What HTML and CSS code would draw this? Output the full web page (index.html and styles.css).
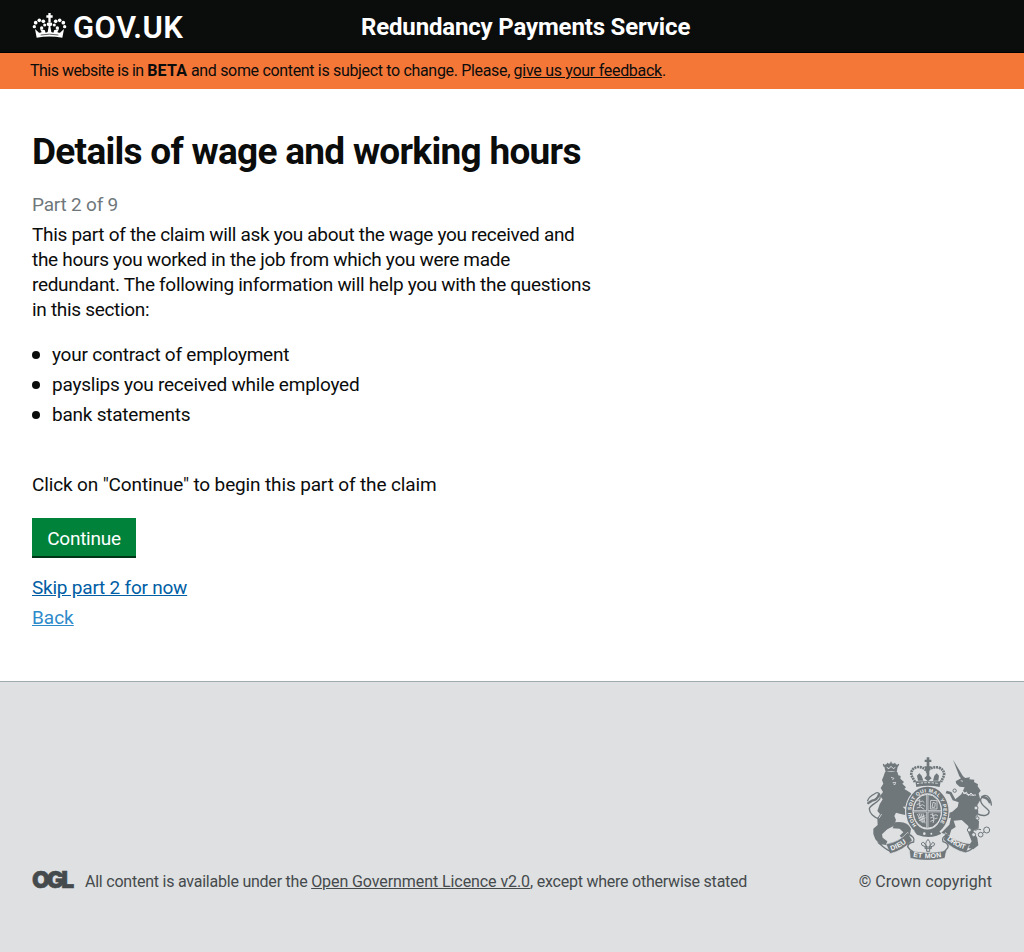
FILE: index.html
```html
<!DOCTYPE html>
<html lang="en">
<head>
<meta charset="utf-8">
<title>Details of wage and working hours</title>
<link rel="stylesheet" href="styles.css">
</head>
<body>
<header class="header">
  <a class="logo" href="#">
    <svg class="crown" viewBox="36 36 105 84" aria-hidden="true">
      <g fill="#fff">
        <path d="M50 113L45 87L57 98Q63 99 65 96L60 88L74 90L77 98L83 96L86 79L80 76L81 68L96 68L97 76L91 79L94 96L100 98L103 90L117 88L112 96Q114 99 120 98L132 87L127 113Q88 106 50 113Z"/>
        <path d="M85 39h7v7h6v7h-6v15h-7V53h-6v-7h6z"/>
        <circle cx="43" cy="80" r="5"/><circle cx="47" cy="68" r="5.5"/><circle cx="58" cy="61" r="5.5"/><circle cx="70" cy="64" r="5.5"/><circle cx="74" cy="75" r="4.5"/><circle cx="65" cy="84" r="5"/>
        <circle cx="134" cy="80" r="5"/><circle cx="130" cy="68" r="5.5"/><circle cx="119" cy="61" r="5.5"/><circle cx="107" cy="64" r="5.5"/><circle cx="103" cy="75" r="4.5"/><circle cx="112" cy="84" r="5"/>
      </g>
      <path d="M62 105Q88 100 115 105" fill="none" stroke="#0b0c0c" stroke-width="2"/>
    </svg>
    <span class="logo-text">GOV.UK</span>
  </a>
  <span class="service">Redundancy Payments Service</span>
</header>
<div class="beta"><span class="beta-lead">This website is in </span><strong>BETA</strong> and some content is subject to change. Please, <a href="#">give us your feedback</a>.</div>
<main class="main">
  <h1>Details of wage and working hours</h1>
  <p class="part">Part 2 of 9</p>
  <p class="intro">This part of the claim will ask you about the wage you received and<br>the hours you worked in the job from which you were made<br>redundant. The following information will help you with the questions<br>in this section:</p>
  <ul class="list">
    <li>your contract of employment</li>
    <li>payslips you received while employed</li>
    <li>bank statements</li>
  </ul>
  <p class="prompt">Click on "Continue" to begin this part of the claim</p>
  <button class="button" type="button">Continue</button>
  <a class="skip" href="#">Skip part 2 for now</a>
  <a class="back" href="#">Back</a>
</main>
<footer class="footer">
  <div class="licence">
    <span class="ogl">OGL</span>
    <span class="licence-text">All content is available under the <a href="#">Open Government Licence v2.0</a>, except where otherwise stated</span>
  </div>
  <div class="copyright">
    <svg class="arms" viewBox="21 21 375 309" aria-hidden="true">
      <defs>
        <path id="garter" d="M170 226A48 57 0 1 1 234 226"/>
        <path id="dieu" d="M94 302Q122 295 148 270"/>
        <path id="etmon" d="M159 320Q203 329 249 320"/>
        <path id="droit" d="M260 268Q288 293 320 300"/>
      </defs>
      <g fill="#6f777b">
        <!-- lion -->
        <path d="M75 66L112 66L115 76L122 78L121 86L132 96L127 101L138 112L133 117L143 123L152 129L158 137L153 144L156 152L149 158L157 169L156 181L145 181L136 170L128 170L139 181L136 195L119 191L108 188L103 198L108 210L101 228L82 238L66 253L68 263L82 274L79 282L58 281L46 268L40 252L40 236L53 225L52 205L60 192L52 183L59 163L68 148L60 138L69 126L62 114L70 101L66 90L71 78Z"/>
        <path d="M72 45Q93 34 114 45L110 67Q93 61 77 67Z"/>
        <path d="M104 217Q142 211 153 236L149 260L140 263L132 259L126 265L119 257L130 247L119 236L98 235Z"/>
        <!-- unicorn -->
        <path d="M279 29L309 79L316 84L330 82L328 88L343 89L342 96L354 103L353 109L362 122L356 130L361 150L352 165L355 187L346 202L357 214L356 235L340 243L352 264L355 286L340 298L323 293L335 274L325 249L325 228L305 210L281 212L287 231L274 239L268 258L244 248L268 224L273 203L254 207L255 193L277 185L293 171L296 157L278 151L269 133L257 130L260 122L274 126L286 148L304 133L314 112L299 110L289 101L287 94L303 85L298 79Z"/>
      </g>
      <!-- tails -->
      <g fill="none" stroke="#6f777b" stroke-width="4" stroke-linecap="round" stroke-linejoin="round">
        <path d="M58 207C42 202 28 190 28 176C32 163 55 158 60 145C62 128 52 124 43 132Q26 141 23 152M350 190C370 202 389 196 387 183C381 172 360 166 362 148Q368 132 382 138Q393 146 394 165"/>
        <path d="M57 133Q53 150 36 152L25 159M367 141Q383 142 389 157" stroke-width="7"/>
      </g>
      <path d="M93 82L102 85L97 90M98 98L107 97L105 104L100 102M302 92L309 94M65 192L57 205M322 243Q307 230 291 231" fill="none" stroke="#dee0e2" stroke-width="2.5"/>
      <path d="M80 52L87 56L93 49L100 56L106 52" fill="none" stroke="#dee0e2" stroke-width="3"/>
      <g fill="none" stroke="#6f777b" stroke-width="4">
        <path d="M73 50L70 42M84 47L82 39M93 46V35M103 47L105 39M112 50L116 42"/>
      </g>
      <!-- royal crown -->
      <path d="M165 96L154 76Q152 56 171 51Q190 50 201 64Q212 50 235 52Q255 60 252 77L243 96" fill="none" stroke="#6f777b" stroke-width="8" stroke-dasharray="6 2"/>
      <path d="M200 22H208V29H214V36H208V49H214L211 57H196L193 49H200V36H194V29H200ZM166 94H242L239 111Q204 104 169 111ZM200 57H208V77L215 85L204 94L193 85L200 77ZM171 77L178 70L185 77L190 92H174ZM219 92L223 77L230 70L237 77L235 92Z" fill="#6f777b"/>
      <path d="M171 101Q204 95 237 101" fill="none" stroke="#dee0e2" stroke-width="3" stroke-dasharray="7 4"/>
      <!-- garter and shield -->
      <ellipse cx="202" cy="184" rx="67" ry="76" fill="#dee0e2"/>
      <ellipse cx="202" cy="184" rx="54" ry="64" fill="none" stroke="#6f777b" stroke-width="19"/>
      <ellipse cx="202" cy="184" rx="42" ry="51" fill="#6f777b" stroke="#dee0e2" stroke-width="3"/>
      <path d="M202 134V234M161 184H243" stroke="#dee0e2" stroke-width="6"/>
      <path d="M202 134V234M161 184H243" stroke="#6f777b" stroke-width="2"/>
      <path d="M170 153L180 149L177 157L187 153L193 158M170 164L180 160L178 168L188 164L195 169M170 174L182 171L193 178M212 151L231 152V177H211ZM216 172L219 157L226 159L224 172ZM172 192L185 217M177 190L189 219M183 190L191 217M189 190L195 220M174 205L196 197M177 212L197 203M211 194L219 191L217 198L228 194L234 198M211 204L222 200L220 208L232 204M211 214L222 210L219 219" fill="none" stroke="#dee0e2" stroke-width="2.4"/>
      <text class="motto" fill="#f3f4f5"><textPath href="#garter" textLength="248">HONI SOIT QUI MAL Y PENSE</textPath></text>
      <path d="M176 239Q202 255 233 238L244 251L230 257Q202 266 171 254L163 244Z" fill="#6f777b"/>
      <circle cx="193" cy="251" r="4" fill="#dee0e2"/><circle cx="214" cy="251" r="3" fill="#dee0e2"/>
      <!-- chain -->
      <g fill="none" stroke="#6f777b" stroke-width="3">
        <circle cx="284" cy="122" r="5"/><circle cx="348" cy="174" r="6" fill="#dee0e2"/><circle cx="352" cy="205" r="5" fill="#dee0e2"/><circle cx="328" cy="240" r="6" fill="#dee0e2"/><circle cx="341" cy="254" r="6" fill="#dee0e2"/><circle cx="362" cy="254" r="7"/><circle cx="380" cy="240" r="9"/><path d="M346 242Q353 234 363 239M368 249L373 245M348 183L352 199"/>
      </g>
      <path d="M301 118Q318 139 348 135M300 124L308 122L312 132L319 126L325 137L333 129L341 138" fill="none" stroke="#dee0e2" stroke-width="3"/>
      <!-- ribbon -->
      <g fill="#6f777b" stroke="#dee0e2" stroke-width="2">
        <path d="M78 282Q118 276 143 247L157 271Q130 302 90 311Z"/>
        <path d="M256 248Q287 277 330 281L318 309Q280 301 250 269Z"/>
        <path d="M148 301Q203 314 260 301L254 325Q203 337 151 325Z"/>
      </g>
      <path d="M79 283L57 280Q78 299 91 304M143 252Q167 260 161 276Q144 279 143 290Q148 300 158 304L154 322M266 253Q242 260 249 275Q269 281 263 294L252 306V322M327 284L350 281Q334 303 317 305" fill="none" stroke="#6f777b" stroke-width="4"/>
      <path d="M204 268Q192 281 201 292L186 286Q181 277 191 277L200 289V304H209V289L218 277Q228 279 222 287L207 292Q216 282 204 268ZM195 291H214V296H195Z" fill="none" stroke="#6f777b" stroke-width="3"/>
      <g class="ribbon-text" fill="#f3f4f5">
        <text><textPath href="#dieu" textLength="52">DIEU</textPath></text>
        <text><textPath href="#etmon" textLength="86">ET MON</textPath></text>
        <text><textPath href="#droit" textLength="62">DROIT</textPath></text>
      </g>
    </svg>
    <span class="copy-text">© Crown copyright</span>
  </div>
</footer>
</body>
</html>
```
FILE: styles.css
```css
* { box-sizing: border-box; }
body { margin: 0; font-family: Roboto, "Noto Sans", sans-serif; color: #0b0c0c; background: #fff; font-size: 19px; line-height: 25px; white-space: nowrap; }
p, h1, ul { margin: 0; padding: 0; }
.header { display: flex; height: 53px; padding-left: 32px; background: #0b0c0c; border-bottom: 1px solid #000; color: #fff; }
.logo { display: flex; width: 329px; color: #fff; text-decoration: none; }
.crown { width: 35px; height: 28px; margin-top: 12px; }
.logo-text { padding: 12px 0 0 6px; font-size: 31px; line-height: 32px; font-weight: 600; letter-spacing: 0.4px; }
.service { padding-top: 12px; font-size: 24px; line-height: 30px; font-weight: 700; letter-spacing: -0.16px; }
.beta { height: 36px; padding: 8px 30px; background: #f47738; font-size: 16px; line-height: 20px; letter-spacing: -0.33px; }
.beta-lead { letter-spacing: -0.5px; }
.beta strong { letter-spacing: 0.25px; }
.beta a { color: inherit; letter-spacing: -0.29px; }
.main { display: flex; flex-direction: column; align-items: flex-start; height: 592px; padding: 42px 32px 0; }
h1 { font-size: 37px; line-height: 42px; font-weight: 700; letter-spacing: -0.72px; }
.part { margin-top: 19px; color: #6f777b; letter-spacing: -0.2px; }
.intro { margin-top: 5px; letter-spacing: -0.31px; }
.list { margin-top: 20px; list-style: none; letter-spacing: -0.23px; }
.list li { display: flex; align-items: center; gap: 12px; margin-bottom: 5px; }
.list li::before { content: ""; width: 8px; height: 8px; border-radius: 50%; background: #0b0c0c; }
.prompt { margin-top: 40px; letter-spacing: -0.14px; }
.button { width: 104px; height: 40px; margin-top: 21px; padding: 3px 0 0; border: 0; border-bottom: 2px solid #003618; background: #00823b; color: #fff; font: inherit; letter-spacing: -0.25px; }
.skip { margin-top: 17px; color: #005ea5; letter-spacing: -0.22px; }
.back { margin-top: 5px; color: #2e8aca; }
.footer { display: flex; justify-content: space-between; height: 271px; padding: 75px 32px 0; border-top: 1px solid #a1acb2; background: #dee0e2; color: #454a4c; font-size: 16px; line-height: 20px; }
.footer a { color: inherit; letter-spacing: -0.08px; }
.licence { display: flex; padding-top: 115px; letter-spacing: -0.23px; }
.ogl { width: 53px; margin-top: -2px; font: 900 23px/20px Inter, sans-serif; letter-spacing: -3px; -webkit-text-stroke: 0.5px #454a4c; }
.copyright { display: flex; flex-direction: column; align-items: flex-end; letter-spacing: 0.05px; }
.arms { width: 125px; height: 103px; margin-bottom: 12px; }
.motto { font: 700 15px "Liberation Sans", sans-serif; }
.ribbon-text { font: 700 21px "Liberation Sans", sans-serif; }
```
